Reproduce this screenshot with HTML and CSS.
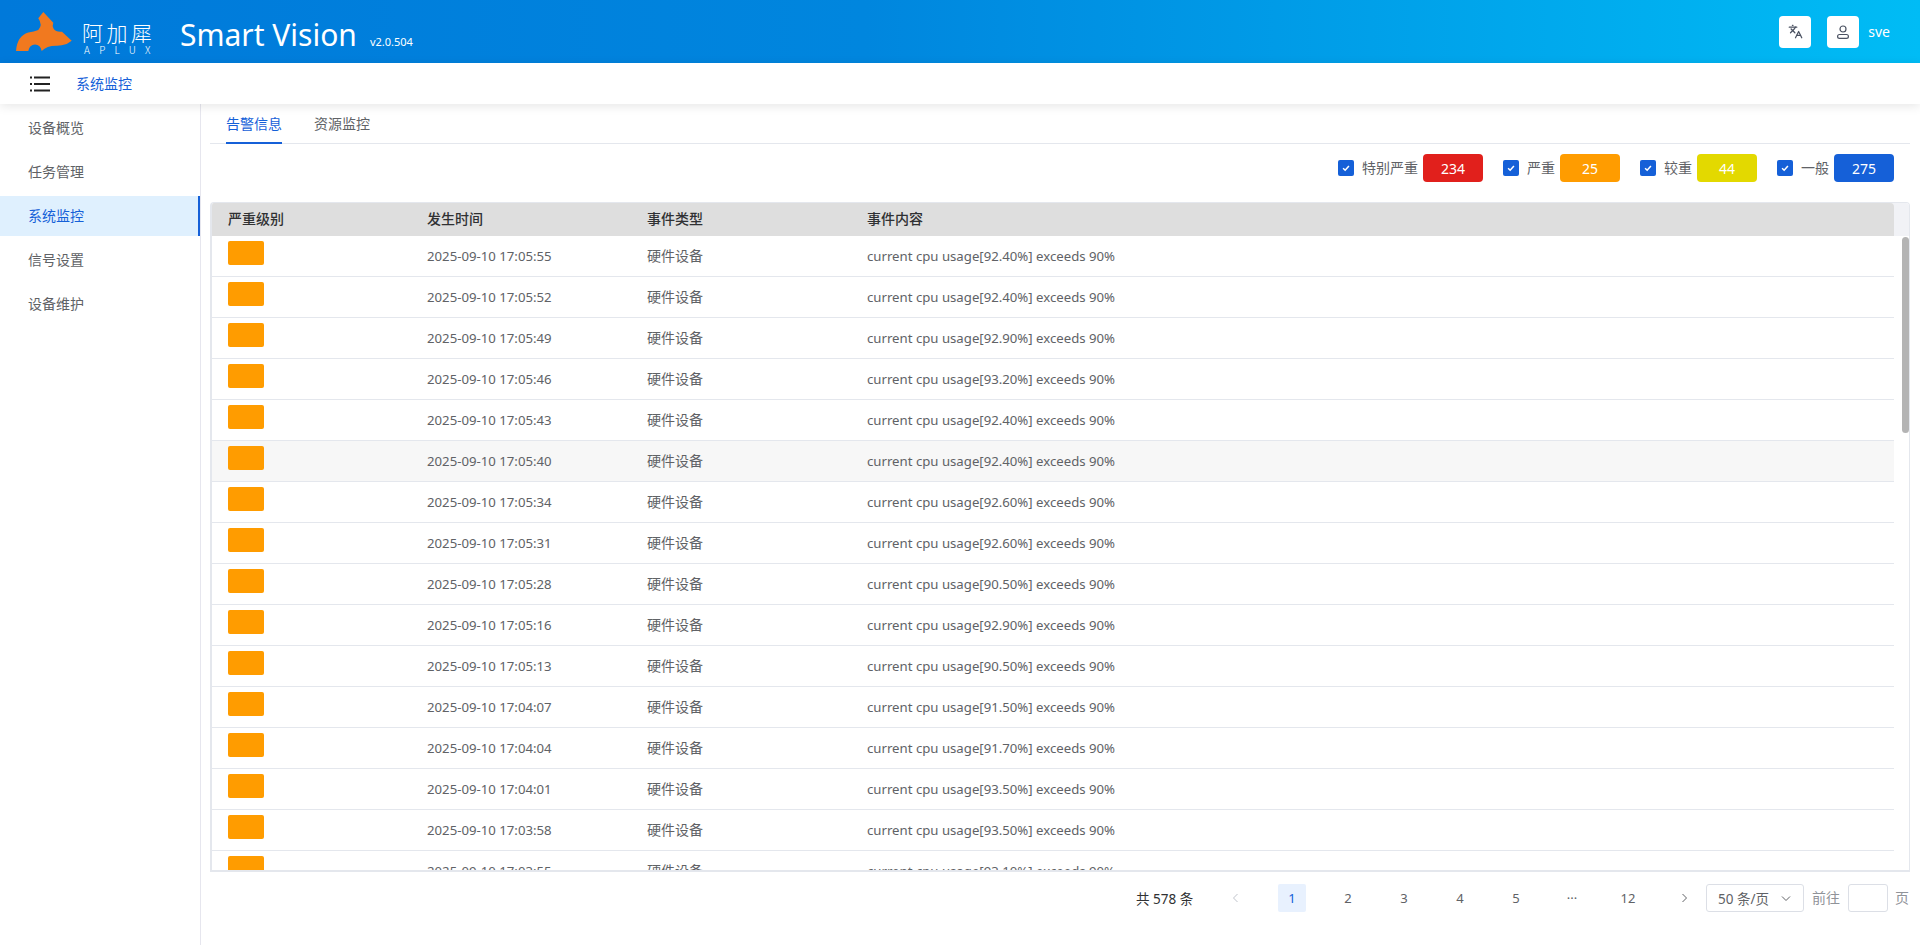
FILE: index.html
```html
<!DOCTYPE html>
<html lang="zh-CN">
<head>
<meta charset="utf-8">
<title>Smart Vision</title>
<link rel="stylesheet" href="styles.css">
</head>
<body>
<header class="topbar">
  <div class="brand">
    <svg class="logo-mark" viewBox="0 0 56 39" width="56" height="39"><path fill="#f1791f" d="M27.300 0 L37.300 10.700 Q36 14 37.500 16.500 Q40 20.500 46 19.700 L55.700 28.700 L50.700 32 Q45 33.800 40.700 33.700 Q31 33.500 25.700 39 Q24.500 32.500 19 32.500 Q13.500 32.500 12.300 39 L0 39 Q1 24 12.300 20.500 Q18 19.500 22.300 18 Q27 13 22.300 6.300 Z"/></svg>
    <div class="logo-text"><span class="logo-cn">阿加犀</span><span class="logo-en">APLUX</span></div>
    <span class="app-name latin">Smart Vision</span>
    <span class="app-version latin">v2.0.504</span>
  </div>
  <div class="top-actions">
    <button class="icon-btn" type="button"><svg viewBox="0 0 24 24" width="15" height="15" fill="none" stroke="#4b5262" stroke-width="2" stroke-linecap="round" stroke-linejoin="round"><path d="m5 8 6 6"/><path d="m4 14 6-6 2-3"/><path d="M2 5h12"/><path d="M7 2h1"/><path d="m22 22-5-10-5 10"/><path d="M14 18h6"/></svg></button>
    <button class="icon-btn user-btn" type="button"><svg viewBox="0 0 16 16" width="16" height="16" fill="none" stroke="#4b5262" stroke-width="1.200"><circle cx="8" cy="5" r="3"/><rect x="2.600" y="10.500" width="10.800" height="3.900" rx="1.900"/></svg></button>
    <span class="user-name latin">sve</span>
  </div>
</header>
<div class="subbar">
  <svg class="menu-icon" viewBox="0 0 20 16" width="20" height="16"><g fill="#222"><rect x="0" y="0.500" width="2" height="2"/><rect x="4" y="0.500" width="16" height="2"/><rect x="0" y="7" width="2" height="2"/><rect x="4" y="7" width="16" height="2"/><rect x="0" y="13.500" width="2" height="2"/><rect x="4" y="13.500" width="16" height="2"/></g></svg>
  <span class="crumb">系统监控</span>
</div>
<div class="body-wrap">
  <nav class="sidebar">
    <a class="nav-item">设备概览</a>
    <a class="nav-item">任务管理</a>
    <a class="nav-item active">系统监控</a>
    <a class="nav-item">信号设置</a>
    <a class="nav-item">设备维护</a>
  </nav>
  <main class="main">
    <div class="tabs">
      <span class="tab active">告警信息</span>
      <span class="tab">资源监控</span>
    </div>
    <div class="filters">
      <label class="filter"><span class="check"><svg viewBox="0 0 12 12" width="10" height="10"><path d="M2.500 6.200 5 8.700 9.500 3.500" fill="none" stroke="#fff" stroke-width="1.800"/></svg></span><span class="filter-label">特别严重</span><span class="badge red latin">234</span></label>
      <label class="filter"><span class="check"><svg viewBox="0 0 12 12" width="10" height="10"><path d="M2.500 6.200 5 8.700 9.500 3.500" fill="none" stroke="#fff" stroke-width="1.800"/></svg></span><span class="filter-label">严重</span><span class="badge orange latin">25</span></label>
      <label class="filter"><span class="check"><svg viewBox="0 0 12 12" width="10" height="10"><path d="M2.500 6.200 5 8.700 9.500 3.500" fill="none" stroke="#fff" stroke-width="1.800"/></svg></span><span class="filter-label">较重</span><span class="badge yellow latin">44</span></label>
      <label class="filter"><span class="check"><svg viewBox="0 0 12 12" width="10" height="10"><path d="M2.500 6.200 5 8.700 9.500 3.500" fill="none" stroke="#fff" stroke-width="1.800"/></svg></span><span class="filter-label">一般</span><span class="badge blue latin">275</span></label>
    </div>
    <section class="table-card">
      <div class="table-head">
        <div class="head-row row-grid">
          <span>严重级别</span><span>发生时间</span><span>事件类型</span><span>事件内容</span>
        </div>
        <div class="head-gutter"></div>
      </div>
      <div class="table-body">
        <div class="row row-grid"><span class="swatch"></span><span class="latin">2025-09-10 17:05:55</span><span>硬件设备</span><span class="latin">current cpu usage[92.40%] exceeds 90%</span></div>
        <div class="row row-grid"><span class="swatch"></span><span class="latin">2025-09-10 17:05:52</span><span>硬件设备</span><span class="latin">current cpu usage[92.40%] exceeds 90%</span></div>
        <div class="row row-grid"><span class="swatch"></span><span class="latin">2025-09-10 17:05:49</span><span>硬件设备</span><span class="latin">current cpu usage[92.90%] exceeds 90%</span></div>
        <div class="row row-grid"><span class="swatch"></span><span class="latin">2025-09-10 17:05:46</span><span>硬件设备</span><span class="latin">current cpu usage[93.20%] exceeds 90%</span></div>
        <div class="row row-grid"><span class="swatch"></span><span class="latin">2025-09-10 17:05:43</span><span>硬件设备</span><span class="latin">current cpu usage[92.40%] exceeds 90%</span></div>
        <div class="row row-grid hover"><span class="swatch"></span><span class="latin">2025-09-10 17:05:40</span><span>硬件设备</span><span class="latin">current cpu usage[92.40%] exceeds 90%</span></div>
        <div class="row row-grid"><span class="swatch"></span><span class="latin">2025-09-10 17:05:34</span><span>硬件设备</span><span class="latin">current cpu usage[92.60%] exceeds 90%</span></div>
        <div class="row row-grid"><span class="swatch"></span><span class="latin">2025-09-10 17:05:31</span><span>硬件设备</span><span class="latin">current cpu usage[92.60%] exceeds 90%</span></div>
        <div class="row row-grid"><span class="swatch"></span><span class="latin">2025-09-10 17:05:28</span><span>硬件设备</span><span class="latin">current cpu usage[90.50%] exceeds 90%</span></div>
        <div class="row row-grid"><span class="swatch"></span><span class="latin">2025-09-10 17:05:16</span><span>硬件设备</span><span class="latin">current cpu usage[92.90%] exceeds 90%</span></div>
        <div class="row row-grid"><span class="swatch"></span><span class="latin">2025-09-10 17:05:13</span><span>硬件设备</span><span class="latin">current cpu usage[90.50%] exceeds 90%</span></div>
        <div class="row row-grid"><span class="swatch"></span><span class="latin">2025-09-10 17:04:07</span><span>硬件设备</span><span class="latin">current cpu usage[91.50%] exceeds 90%</span></div>
        <div class="row row-grid"><span class="swatch"></span><span class="latin">2025-09-10 17:04:04</span><span>硬件设备</span><span class="latin">current cpu usage[91.70%] exceeds 90%</span></div>
        <div class="row row-grid"><span class="swatch"></span><span class="latin">2025-09-10 17:04:01</span><span>硬件设备</span><span class="latin">current cpu usage[93.50%] exceeds 90%</span></div>
        <div class="row row-grid"><span class="swatch"></span><span class="latin">2025-09-10 17:03:58</span><span>硬件设备</span><span class="latin">current cpu usage[93.50%] exceeds 90%</span></div>
        <div class="row row-grid"><span class="swatch"></span><span class="latin">2025-09-10 17:03:55</span><span>硬件设备</span><span class="latin">current cpu usage[93.10%] exceeds 90%</span></div>
      </div>
      <div class="scroll-thumb"></div>
    </section>
    <div class="pagination">
      <span class="total latin">共 578 条</span>
      <span class="page-btn arrow disabled"><svg viewBox="0 0 12 12" width="12" height="12" fill="none" stroke="currentColor"><path d="M7.500 2 3.500 6l4 4"/></svg></span>
      <span class="page-btn current latin">1</span>
      <span class="page-btn latin">2</span>
      <span class="page-btn latin">3</span>
      <span class="page-btn latin">4</span>
      <span class="page-btn latin">5</span>
      <span class="page-btn latin">···</span>
      <span class="page-btn latin">12</span>
      <span class="page-btn arrow"><svg viewBox="0 0 12 12" width="12" height="12" fill="none" stroke="currentColor"><path d="M4.500 2l4 4-4 4"/></svg></span>
      <span class="size-select"><span class="latin">50 条/页</span><svg viewBox="0 0 12 12" width="12" height="12" fill="none" stroke="#606266"><path d="M2 4.500 6 8.500 10 4.500"/></svg></span>
      <span class="goto">前往</span>
      <span class="goto-input"></span>
      <span class="goto-suffix">页</span>
    </div>
  </main>
</div>
</body>
</html>
```
FILE: styles.css
```css
* { box-sizing: border-box; }
html, body { margin: 0; height: 100%; overflow: hidden; }
body {
  font-family: "Noto Sans CJK SC", "Noto Sans", sans-serif;
  font-size: 14px;
  color: #606266;
  background: #fff;
  display: flex;
  flex-direction: column;
}
.latin { font-family: "Noto Sans", "Noto Sans CJK SC", sans-serif; }
.topbar {
  height: 63px;
  flex: none;
  display: flex;
  justify-content: space-between;
  align-items: center;
  padding: 0 30px 0 16px;
  background: linear-gradient(90deg, #0079da 0%, #0086de 45%, #00bcf5 100%);
  color: #fff;
}
.brand { display: flex; align-items: center; }
.logo-mark { display: block; margin-top: 0; }
.logo-text { display: flex; flex-direction: column; margin-left: 10px; width: 72px; padding-top: 14px; }
.logo-cn { font-size: 21px; line-height: 22px; font-weight: 200; letter-spacing: 3.500px; white-space: nowrap; }
.logo-en { font-size: 10px; line-height: 12px; margin-top: 1px; letter-spacing: 9.300px; padding-left: 2px; font-weight: 300; white-space: nowrap; }
.app-name { font-size: 30px; margin-left: 26px; line-height: 40px; white-space: nowrap; padding-top: 7px; }
.app-version { font-size: 11px; margin-left: 13px; margin-top: 20px; }
.top-actions { display: flex; align-items: center; }
.icon-btn {
  width: 32px; height: 32px; padding: 0; border: 0; background: #fff; border-radius: 4px;
  display: flex; align-items: center; justify-content: center;
}
.user-btn { margin-left: 16px; }
.user-name { margin-left: 9px; font-size: 14px; }
.subbar {
  height: 41px;
  flex: none;
  display: flex;
  align-items: center;
  padding-left: 30px;
  background: #fff;
  box-shadow: 0 2px 10px rgba(0, 0, 0, .1);
  position: relative;
  z-index: 2;
}
.crumb { margin-left: 26px; color: #1560d8; padding-bottom: 2px; }
.body-wrap { flex: 1; display: flex; min-height: 0; }
.sidebar { width: 201px; flex: none; border-right: 1px solid #e6e6ee; padding-top: 4px; }
.nav-item {
  display: flex; align-items: center; height: 40px; margin-bottom: 4px; padding: 0 0 2px 28px;
  color: #606266; white-space: nowrap;
}
.nav-item.active { background: #dff0fe; color: #1560d8; border-right: 2px solid #1560d8; }
.main { flex: 1; min-width: 0; padding: 0 10px 0 9px; display: flex; flex-direction: column; }
.tabs { height: 40px; flex: none; display: flex; padding-left: 16px; gap: 32px; border-bottom: 1px solid #e4e7ed; }
.tab { height: 40px; line-height: 38px; color: #606266; }
.tab.active { color: #1560d8; border-bottom: 2px solid #1560d8; }
.filters { height: 28px; margin-top: 10px; flex: none; display: flex; justify-content: flex-end; gap: 20px; padding-right: 16px; }
.filter { display: flex; align-items: center; }
.check { width: 16px; height: 16px; border-radius: 2px; background: #1560d8; display: flex; align-items: center; justify-content: center; }
.filter-label { margin-left: 8px; color: #606266; padding-bottom: 2px; }
.badge { width: 60px; height: 28px; margin-left: 5px; border-radius: 4px; color: #fff; display: flex; align-items: center; justify-content: center; font-size: 14px; }
.red { background: #e1201c; }
.orange { background: #ff9c00; }
.yellow { background: #e3d900; }
.blue { background: #1560d8; }
.table-card {
  margin-top: 20px; height: 670px; flex: none; position: relative; overflow: hidden;
  border: 1px solid #e4e7ed; border-width: 1px 1px 2px 2px; border-radius: 4px 4px 0 0; display: flex; flex-direction: column;
}
.table-head { display: flex; flex: none; height: 33px; background: #f1f2f6; }
.head-row { flex: none; width: 1682px; background: #dedede; color: #303133; font-weight: 500; height: 33px; border-radius: 0 4px 0 0; }
.head-row > span { padding-bottom: 4px; }
.head-gutter { flex: 1; }
.row-grid { display: grid; grid-template-columns: 199px 220px 220px 1fr; align-items: center; padding-left: 16px; }
.table-body { flex: 1; overflow: hidden; padding-right: 15px; }
.row { height: 41px; border-bottom: 1px solid #e4e7ed; width: 1682px; }
.row > span { padding-bottom: 2px; }
.row > .latin { font-size: 13.200px; padding-bottom: 0; }
.row.hover { background: #f7f7f7; }
.row > .swatch { display: block; width: 36px; height: 24px; padding: 0; background: #ff9c00; border-radius: 2px; align-self: start; margin-top: 5px; }
.scroll-thumb { position: absolute; right: 0; top: 34px; width: 7px; height: 196px; border-radius: 4px; background: #b4b4b4; }
.pagination { height: 28px; margin-top: 12px; flex: none; display: flex; align-items: center; white-space: nowrap; }
.total { margin-left: 926px; width: 58px; color: #303133; font-size: 13.500px; padding-bottom: 1px; }
.page-btn { width: 28px; height: 28px; margin-left: 28px; flex: none; display: flex; align-items: center; justify-content: center; border-radius: 2px; color: #606266; font-size: 13px; }
.page-btn.current { background: #e8f1fe; color: #1560d8; }
.page-btn.disabled { color: #c0c4cc; }
.size-select { width: 98px; height: 28px; margin-left: 8px; border: 1px solid #dcdfe6; border-radius: 3px; display: flex; align-items: center; justify-content: space-between; padding: 0 11px; font-size: 13.500px; }
.goto { margin-left: 8px; color: #909399; padding-bottom: 2px; }
.goto-input { width: 40px; height: 28px; margin-left: 8px; border: 1px solid #dcdfe6; border-radius: 3px; }
.goto-suffix { margin-left: 7px; color: #909399; padding-bottom: 2px; }
```
